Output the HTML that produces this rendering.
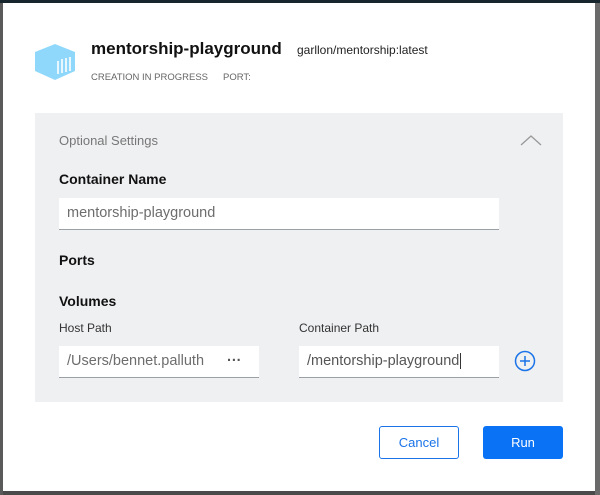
<!DOCTYPE html>
<html><head><style>
*{margin:0;padding:0;box-sizing:border-box}
body{width:600px;height:495px;background:#4a4a4a;position:relative;overflow:hidden;font-family:"Liberation Sans",sans-serif}
.a{position:absolute}
.inp{position:absolute;background:#fff;border-bottom:1px solid #9aa0a6;font-size:14.5px;color:#6d6d6d;padding-left:8px;line-height:31px;white-space:nowrap;overflow:hidden}
.lab{position:absolute;font-size:14px;font-weight:bold;color:#111}
.sm{position:absolute;font-size:12px;color:#333}
</style></head><body>
<div class="a" style="left:0;top:0;width:600px;height:3px;background:#17262d"></div>
<div class="a" style="left:0;top:3px;width:3px;height:492px;background:#5a5a5a"></div>
<div class="a" style="left:595px;top:3px;width:5px;height:492px;background:#6a6a6a"></div>
<div class="a" style="left:3px;top:3px;width:592px;height:488px;background:#fff"></div>
<svg class="a" style="left:34px;top:43px" width="42" height="38" viewBox="0 0 42 38">
<polygon points="1,9 21,1 41,9 41,28 21,37 1,28" fill="#8fd8fb"/>
<g stroke="#fff" stroke-width="1.6"><line x1="24" y1="18" x2="24" y2="31"/><line x1="28" y1="16" x2="28" y2="30"/><line x1="32" y1="15" x2="32" y2="29"/><line x1="36" y1="14" x2="36" y2="28"/></g>
</svg>
<div class="a" style="left:91px;top:39px;font-size:17px;font-weight:bold;color:#111">mentorship-playground</div>
<div class="a" style="left:297px;top:43px;font-size:12px;color:#222">garllon/mentorship:latest</div>
<div class="a" style="left:91px;top:72px;font-size:9.5px;color:#666">CREATION IN PROGRESS</div>
<div class="a" style="left:223px;top:72px;font-size:9.5px;color:#666">PORT:</div>
<div class="a" style="left:35px;top:113px;width:528px;height:289px;background:#eff0f2"></div>
<div class="a" style="left:59px;top:133px;font-size:13px;color:#777">Optional Settings</div>
<svg class="a" style="left:520px;top:134px" width="22" height="12"><polyline points="1,11 11,2 21,11" fill="none" stroke="#999" stroke-width="1.3"/></svg>
<div class="lab" style="left:59px;top:171px">Container Name</div>
<div class="inp" style="left:59px;top:198px;width:440px;height:32px">mentorship-playground</div>
<div class="lab" style="left:59px;top:252px">Ports</div>
<div class="lab" style="left:59px;top:293px">Volumes</div>
<div class="sm" style="left:59px;top:321px">Host Path</div>
<div class="sm" style="left:299px;top:321px">Container Path</div>
<div class="inp" style="left:59px;top:346px;width:200px;height:32px">/Users/bennet.palluth<span style="position:absolute;left:148px;top:0;background:#fff;width:52px;color:#555;font-weight:bold;padding-left:20px">···</span></div>
<div class="inp" style="left:299px;top:346px;width:200px;height:32px;color:#555">/mentorship-playground<span style="border-left:1px solid #333;margin-left:1px"></span></div>
<svg class="a" style="left:514px;top:350px" width="22" height="22"><circle cx="11" cy="11" r="9.5" fill="none" stroke="#1a73e8" stroke-width="1.5"/><path d="M11 6V16M6 11H16" stroke="#1a73e8" stroke-width="1.5"/></svg>
<div class="a" style="left:379px;top:426px;width:80px;height:33px;border:1px solid #1a73e8;border-radius:3px;color:#1a73e8;font-size:13px;text-align:center;line-height:31px">Cancel</div>
<div class="a" style="left:483px;top:426px;width:80px;height:33px;background:#0a72f4;border-radius:3px;color:#fff;font-size:13px;text-align:center;line-height:33px">Run</div>
</body></html>
